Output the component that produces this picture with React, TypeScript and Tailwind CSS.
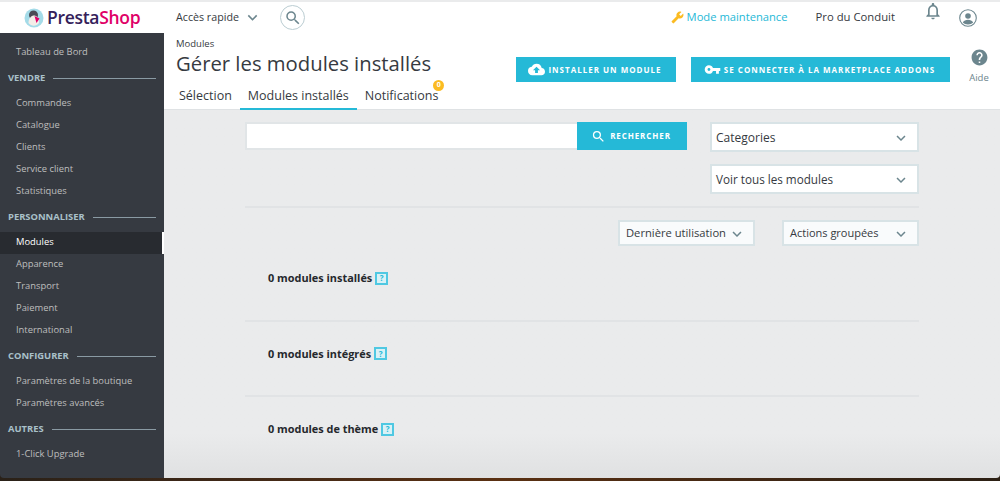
import { MdBuild, MdCloudUpload, MdHelp, MdKeyboardArrowDown, MdNotificationsNone, MdSearch, MdVpnKey } from "react-icons/md";

const font = { fontFamily: '"Open Sans", sans-serif' };

const sideGroups = [
  { title: "VENDRE", items: ["Commandes", "Catalogue", "Clients", "Service client", "Statistiques"] },
  { title: "PERSONNALISER", items: ["Modules", "Apparence", "Transport", "Paiement", "International"] },
  { title: "CONFIGURER", items: ["Paramètres de la boutique", "Paramètres avancés"] },
  { title: "AUTRES", items: ["1-Click Upgrade"] },
];

const Logo = () => (
  <svg width="20" height="20" viewBox="0 0 20 20">
    <circle cx="10" cy="10" r="9.5" fill="#a4dbe8" />
    <circle cx="9.5" cy="7" r="4.5" fill="#4a4a55" />
    <path d="M4.5 15c0-5 3-7.5 5.5-7.5s5 2.5 5 7.5c-3 3.5-7.5 3.5-10.500 0z" fill="#f4ede8" />
    <path d="M10.500 8l5 2.500-3 4.500z" fill="#df0067" />
  </svg>
);

const Select = ({ label, className }: { label: string; className: string }) => (
  <div className={`flex items-center justify-between border-2 border-[#d8e3e6] pt-[1px] whitespace-nowrap text-[#363a41] ${className}`}>
    <span>{label}</span>
    <MdKeyboardArrowDown size={18} className="text-[#6c868e]" />
  </div>
);

const Help = () => (
  <span className="ml-[3px] inline-flex w-[13px] h-[13px] items-center justify-center border-2 border-[#4fc8e2] bg-[#d9f1f6] text-[8px] font-bold leading-none text-[#25b9d7]">
    ?
  </span>
);

const ModuleHead = ({ text, last }: { text: string; last?: boolean }) => (
  <div className={`h-[75.5px] pl-[23px] pt-[24px] ${last ? "" : "border-b-2 border-[#e1e3e5]"}`}>
    <div className="flex items-center text-[10.900px] leading-[16px] font-bold text-[#25282c]">
      {text}
      <Help />
    </div>
  </div>
);

export default function App() {
  return (
    <div className="h-[481px] w-[1000px] overflow-hidden flex flex-col bg-gradient-to-r from-[#2a2118] via-[#5a3012] to-[#2c2014]" style={font}>
      <div className="h-[2px] bg-[#eaebec]" />
      <header className="h-[31px] bg-white flex items-center text-[#363a41]">
        <div className="w-[176px] pl-[24px] flex items-center gap-[3px]">
          <Logo />
          <span className="text-[17.500px] font-semibold tracking-[-0.3px] leading-none">
            <span className="text-[#34215a]">Presta</span>
            <span className="text-[#df0067]">Shop</span>
          </span>
        </div>
        <div className="flex items-center gap-[4px] w-[104px] text-[10.700px]">
          Accès rapide
          <MdKeyboardArrowDown size={19} className="text-[#6c868e]" />
        </div>
        <div className="w-[25px] h-[25px] rounded-full border border-[#bbcdd2] flex items-center justify-center">
          <MdSearch size={18} className="text-[#6c868e]" />
        </div>
        <div className="ml-auto flex items-center text-[11.200px] text-[#25b9d7] gap-[3px] mr-[28px]">
          <MdBuild size={13} className="text-[#fbbb22] -scale-x-100" />
          Mode maintenance
        </div>
        <span className="mr-[28px] text-[11.300px]">Pro du Conduit</span>
        <MdNotificationsNone size={20} className="text-[#6c868e] mb-[14px] mr-[16px]" />
        <svg width="18" height="18" viewBox="0 0 18 18" className="mr-[23px]">
          <circle cx="9" cy="9" r="8.300" fill="none" stroke="#6c868e" strokeWidth="1.100" />
          <circle cx="9" cy="7" r="2.800" fill="#6c868e" />
          <path d="M3.800 13.500c1-2 3-2.800 5.200-2.800s4.200.8 5.200 2.800c-1.200 1.300-3 2-5.200 2s-4-.7-5.200-2z" fill="#6c868e" />
        </svg>
      </header>
      <div className="flex-1 flex min-h-0">
        <aside className="w-[164px] h-[445px] shrink-0 bg-[#363a41] rounded-bl-[4px] text-[9.400px] text-[#bebebe] pt-[8.500px]">
          <div className="h-[22px] pl-[16px] flex items-center">Tableau de Bord</div>
          {sideGroups.map((g) => (
            <div key={g.title}>
              <div className="h-[29px] px-[8px] flex items-center gap-[8px] font-bold text-[#a9c0c9]">
                {g.title}
                <div className="flex-1 h-px bg-[#8a9aa3]" />
              </div>
              {g.items.map((item) => (
                <div
                  key={item}
                  className={`h-[22px] pl-[16px] flex items-center ${item === "Modules" ? "bg-[#282b30] text-white border-r-[2px] border-white" : ""}`}
                >
                  {item}
                </div>
              ))}
            </div>
          ))}
        </aside>
        <main className="flex-1 min-w-0 h-[445px] rounded-br-[4px] bg-gradient-to-b from-[#eaebec] from-90% to-[#e0e1e2]">
          <div className="h-[77px] bg-white relative pl-[12px] pt-[4px] border-b border-[#dfe2e4]">
            <div className="text-[9.500px] leading-[14px] text-[#363a41]">Modules</div>
            <h1 className="text-[20.300px] leading-[24px] text-[#363a41]">Gérer les modules installés</h1>
            <div className="flex mt-[9px] text-[12.500px] text-[#363a41] -ml-[12px] pl-[7px]">
              <div className="px-[8px] h-[26px] flex items-center border-b-2 border-transparent">Sélection</div>
              <div className="px-[8px] h-[26px] flex items-center border-b-2 border-[#25b9d7]">Modules installés</div>
              <div className="px-[8px] h-[26px] flex items-center border-b-2 border-transparent relative">
                Notifications
                <span className="absolute -top-[4px] right-[2px] w-[11px] h-[11px] rounded-full bg-[#fbbb22] text-white text-[7px] font-bold flex items-center justify-center">0</span>
              </div>
            </div>
            <div className="absolute left-[352px] top-[24px] flex gap-[15px]">
              <button className="w-[160px] h-[25px] pr-[2px] bg-[#25b9d7] text-white text-[8px] font-bold tracking-[1px] flex items-center justify-center gap-[3px]">
                <MdCloudUpload size={17} />
                INSTALLER UN MODULE
              </button>
              <button className="w-[259px] h-[25px] pr-[2px] bg-[#25b9d7] text-white text-[8px] font-bold tracking-[1px] flex items-center justify-center gap-[3px]">
                <MdVpnKey size={17} />
                SE CONNECTER À LA MARKETPLACE ADDONS
              </button>
            </div>
            <div className="absolute left-[801px] top-[15px] w-[28px] flex flex-col items-center text-[9.500px] text-[#6c868e]">
              <MdHelp size={19} />
              <span className="mt-[5px] leading-[12px]">Aide</span>
            </div>
          </div>
          <div className="w-[674px] ml-[81px] pt-[12px]">
            <div className="flex justify-between">
              <div className="flex h-[28px] w-[442px]">
                <div className="flex-1 bg-white border-y-2 border-l-2 border-[#e1e5e7]" />
                <button className="w-[110px] pr-[2px] bg-[#25b9d7] text-white text-[8px] font-bold tracking-[0.9px] flex items-center justify-center gap-[4px]">
                  <MdSearch size={15} />
                  RECHERCHER
                </button>
              </div>
              <Select label="Categories" className="w-[209px] h-[30px] pl-[4px] pr-[7px] text-[12px] bg-white" />
            </div>
            <div className="flex justify-end mt-[12px]">
              <Select label="Voir tous les modules" className="w-[209px] h-[30px] pl-[4px] pr-[7px] text-[11.700px] bg-white" />
            </div>
            <div className="mt-[12px] border-t-2 border-[#e1e3e5] pt-[12px] flex justify-end gap-[27px]">
              <Select label="Dernière utilisation" className="w-[137px] h-[26px] pl-[6px] pr-[7px] text-[11.200px] bg-[#f9fbfc]" />
              <Select label="Actions groupées" className="w-[137px] h-[26px] pl-[6px] pr-[7px] text-[11px] bg-[#f9fbfc]" />
            </div>
            <ModuleHead text="0 modules installés" />
            <ModuleHead text="0 modules intégrés" />
            <ModuleHead text="0 modules de thème" last />
          </div>
        </main>
      </div>
      <div className="h-[3px]" />
    </div>
  );
}
